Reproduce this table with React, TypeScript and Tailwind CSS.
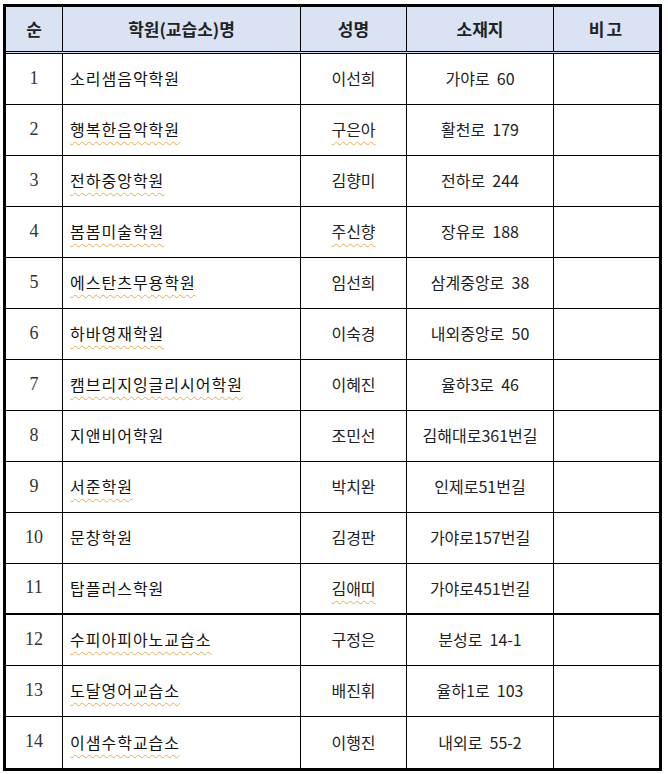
import React from 'react';

type Row = {
  no: number;
  name: string;
  nameMark?: boolean;
  person: string;
  personMark?: boolean;
  addr: string;
};

const rows: Row[] = [
  { no: 1, name: '소리샘음악학원', person: '이선희', addr: '가야로  60' },
  { no: 2, name: '행복한음악학원', nameMark: true, person: '구은아', personMark: true, addr: '활천로  179' },
  { no: 3, name: '전하중앙학원', nameMark: true, person: '김향미', addr: '전하로  244' },
  { no: 4, name: '봄봄미술학원', nameMark: true, person: '주신향', personMark: true, addr: '장유로  188' },
  { no: 5, name: '에스탄츠무용학원', nameMark: true, person: '임선희', addr: '삼계중앙로  38' },
  { no: 6, name: '하바영재학원', nameMark: true, person: '이숙경', addr: '내외중앙로  50' },
  { no: 7, name: '캠브리지잉글리시어학원', nameMark: true, person: '이혜진', addr: '율하3로  46' },
  { no: 8, name: '지앤비어학원', person: '조민선', addr: '김해대로361번길' },
  { no: 9, name: '서준학원', nameMark: true, person: '박치완', addr: '인제로51번길' },
  { no: 10, name: '문창학원', person: '김경판', addr: '가야로157번길' },
  { no: 11, name: '탑플러스학원', person: '김애띠', personMark: true, addr: '가야로451번길' },
  { no: 12, name: '수피아피아노교습소', nameMark: true, person: '구정은', addr: '분성로  14-1' },
  { no: 13, name: '도달영어교습소', nameMark: true, person: '배진휘', addr: '율하1로  103' },
  { no: 14, name: '이샘수학교습소', nameMark: true, person: '이행진', addr: '내외로  55-2' },
];

const grid = 'grid grid-cols-[57px_238px_106px_147px_105px]';
// 맞춤법 검사 밑줄 (주황 물결)
const mark = 'underline decoration-wavy decoration-[#e8ac50] decoration-1 underline-offset-[5px]';

const App: React.FC = () => {
  return (
    <div className="min-h-screen bg-white pt-[4px] pl-[3px]">
      <div className="w-[659px] border-[3px] border-black text-[#1a1a1a]">
        {/* 머리글 */}
        <div className={`${grid} h-[47px] border-b-[3px] border-double border-black bg-[#dae3f3] font-bold text-[17px] text-[#222] font-['Noto_Sans_CJK_KR',sans-serif]`}>
          <div className="flex items-center justify-center border-r border-black">순</div>
          <div className="flex items-center justify-center border-r border-black">학원(교습소)명</div>
          <div className="flex items-center justify-center border-r border-black">성명</div>
          <div className="flex items-center justify-center border-r border-black">소재지</div>
          <div className="flex items-center justify-center tracking-[2px]">비고</div>
        </div>

        {rows.map((r, i) => (
          <div
            key={r.no}
            className={`${grid} h-[51px] ${
              i === rows.length - 1 ? '' : i === 10 ? 'border-b-2 border-black' : 'border-b border-black'
            }`}
          >
            <div className="flex items-center justify-center border-r border-black pb-[2px] font-['Liberation_Serif',serif] text-[18px] text-[#333]">
              {r.no}
            </div>
            <div className="flex items-center border-r border-black pl-[7px] pb-[2px] font-['Noto_Sans_CJK_KR',sans-serif] text-[16px] tracking-[1px] text-[#111]">
              <span className={r.nameMark ? mark : ''}>{r.name}</span>
            </div>
            <div className="flex items-center justify-center border-r border-black pb-[2px] font-['Noto_Sans_CJK_KR',sans-serif] text-[16px] text-[#222]">
              <span className={r.personMark ? mark : ''}>{r.person}</span>
            </div>
            <div className="flex items-center justify-center border-r border-black pb-[2px] font-['Noto_Sans_CJK_KR',sans-serif] text-[16px] text-[#222] whitespace-pre">
              {r.addr}
            </div>
            <div />
          </div>
        ))}
      </div>
    </div>
  );
};

export default App;
